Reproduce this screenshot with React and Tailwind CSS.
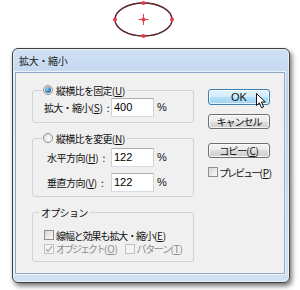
import React from "react";

const M = ({ c }) => (
  <span className="tracking-[-0.2px]">
    (<span className="underline">{c}</span>)
  </span>
);

function Radio({ checked }) {
  return (
    <span className="w-[10px] h-[10px] shrink-0 rounded-full border border-[#8e8f8f] bg-[radial-gradient(circle_at_60%_65%,#ffffff,#d8d8d8)] flex items-center justify-center">
      {checked && (
        <span className="w-[6px] h-[6px] rounded-full bg-[radial-gradient(circle_at_35%_35%,#8fd8fb,#1c64a0_70%)]" />
      )}
    </span>
  );
}

function Check({ checked, disabled }) {
  return (
    <span
      className={`w-[10px] h-[10px] shrink-0 border flex items-center justify-center ${
        disabled
          ? "border-[#c2c2c2] bg-[#f4f4f4]"
          : "border-[#8e8f8f] bg-[linear-gradient(135deg,#d6d6d6,#fbfbfb)]"
      }`}
    >
      {checked && (
        <svg width="8" height="8" viewBox="0 0 8 8">
          <path d="M1 4.2 L3 6.5 L7 1.2" fill="none" stroke="#a6a6a6" strokeWidth="1.2" />
        </svg>
      )}
    </span>
  );
}

function Btn({ children, hot, cls }) {
  return (
    <div
      className={`relative w-[62px] flex items-center justify-center rounded-[3px] border leading-none shadow-[inset_0_0_0_1px_rgba(255,255,255,0.75)] ${
        hot
          ? "border-[#3c7fb1] bg-[linear-gradient(#e6f4fd,#d2ecfb_50%,#b6e1fb_50%,#9fd3f2)]"
          : "border-[#707070] bg-[linear-gradient(#f2f2f2,#ebebeb_50%,#dddddd_50%,#cfcfcf)]"
      } ${cls}`}
    >
      {children}
    </div>
  );
}

function Field({ value }) {
  return (
    <div className="w-[43px] h-[19px] shrink-0 bg-white border border-[#abadb3] border-b-[#d8dce2] border-l-[#cfd2d8] border-r-[#cfd2d8] flex items-center pl-[2px] text-[11px] font-['Liberation_Sans',sans-serif] text-black">
      {value}
    </div>
  );
}

const Pct = () => (
  <span className="ml-[3px] font-['Liberation_Sans',sans-serif] text-[11px]">%</span>
);

export default function App() {
  return (
    <div className="w-[300px] h-[290px] bg-white overflow-hidden font-['Noto_Sans_CJK_JP',sans-serif] text-[10px] text-[#111]">
      {/* ellipse */}
      <div className="h-[48px] pl-[109px]">
        <svg width="70" height="42" viewBox="0 0 70 42">
          <ellipse cx="34.5" cy="19.5" rx="28.5" ry="16.5" fill="none" stroke="#1a1414" strokeWidth="1.4" />
          <ellipse cx="34.5" cy="19.5" rx="28.5" ry="16.5" fill="none" stroke="#e0404c" strokeWidth="0.5" />
          <circle cx="6" cy="19.5" r="2" fill="#ee3a4c" />
          <circle cx="63" cy="19.5" r="2" fill="#ee3a4c" />
          <circle cx="34.5" cy="3" r="2" fill="#ee3a4c" />
          <circle cx="34.5" cy="36" r="2" fill="#ee3a4c" />
          <path d="M29.5 19.5 H39.5 M34.5 14 V25" stroke="#ee3a4c" strokeWidth="1" />
          <circle cx="34.5" cy="19.5" r="2" fill="#ee3a4c" />
        </svg>
      </div>

      {/* dialog */}
      <div className="ml-[12px] w-[278px] h-[235px] rounded-[6px] border border-[#3f3f3f] bg-[linear-gradient(180deg,#cfe0f3,#bcd3ed_18%,#c8dbf0_60%,#d0e1f3)] shadow-[inset_0_0_0_1px_rgba(255,255,255,0.55),2px_3px_5px_rgba(0,0,0,0.55)] flex flex-col pl-[2px] pr-[4px] pb-[8px]">
        <div className="h-[23px] flex items-center pl-[4px] text-[10px] tracking-[-0.3px] text-[#1a1a1a]">
          拡大・縮小
        </div>
        <div className="flex-1 flex border border-[#8ea8c5] bg-[#f0f0f0] shadow-[0_0_0_1px_rgba(255,255,255,0.6)]">
          {/* left column */}
          <div className="ml-[16px] w-[162px] flex flex-col pt-[10px]">
            <fieldset className="border border-[#cdd3d9] rounded-[3px] pb-[5px]">
              <legend className="ml-[9px] pl-[1px] pr-[2px] h-[14px] flex items-center gap-[3px]">
                <Radio checked />
                <span className="whitespace-nowrap">
                  <span className="tracking-[-0.7px]">縦横比を固定</span>
                  <M c="U" />
                </span>
              </legend>
              <div className="mt-[1px] flex items-center pl-[11px]">
                <span className="w-[67px] whitespace-nowrap">
                  <span className="tracking-[-0.7px]">拡大・縮小</span>
                  <M c="S" />
                  <span className="ml-[4px]">:</span>
                </span>
                <Field value="400" />
                <Pct />
              </div>
            </fieldset>

            <fieldset className="mt-[8px] border border-[#cdd3d9] rounded-[3px] pb-[4px]">
              <legend className="ml-[9px] pl-[1px] pr-[2px] h-[14px] flex items-center gap-[3px]">
                <Radio />
                <span className="whitespace-nowrap">
                  <span className="tracking-[-0.7px]">縦横比を変更</span>
                  <M c="N" />
                </span>
              </legend>
              <div className="mt-[3px] flex items-center pl-[14px]">
                <span className="w-[64px] whitespace-nowrap">
                  <span className="tracking-[-0.5px]">水平方向</span>
                  <M c="H" />
                  <span className="ml-[4px]">:</span>
                </span>
                <Field value="122" />
                <Pct />
              </div>
              <div className="mt-[6px] flex items-center pl-[14px]">
                <span className="w-[64px] whitespace-nowrap">
                  <span className="tracking-[-0.5px]">垂直方向</span>
                  <M c="V" />
                  <span className="ml-[4px]">:</span>
                </span>
                <Field value="122" />
                <Pct />
              </div>
            </fieldset>

            <fieldset className="mt-[8px] border border-[#cdd3d9] rounded-[3px] pb-[6px]">
              <legend className="ml-[6px] px-[2px] h-[14px] flex items-center tracking-[-0.7px]">オプション</legend>
              <div className="mt-[9px] h-[14px] flex items-center pl-[11px] gap-[2px]">
                <Check />
                <span className="whitespace-nowrap">
                  <span className="tracking-[-1.1px]">線幅と効果も拡大・縮小</span>
                  <M c="E" />
                </span>
              </div>
              <div className="h-[13px] flex items-center pl-[11px] text-[#8d8d8d]">
                <Check checked disabled />
                <span className="ml-[2px] whitespace-nowrap">
                  <span className="tracking-[-2px]">オブジェクト</span>
                  <M c="O" />
                </span>
                <span className="ml-[7px]">
                  <Check disabled />
                </span>
                <span className="ml-[2px] whitespace-nowrap">
                  <span className="tracking-[-1.4px]">パターン</span>
                  <M c="T" />
                </span>
              </div>
            </fieldset>
          </div>

          {/* right column */}
          <div className="ml-[14px] w-[62px] flex flex-col pt-[16px]">
            <Btn hot cls="h-[16px]">
              <span className="font-['Liberation_Sans',sans-serif] text-[11px]">OK</span>
              <svg className="absolute left-[47px] top-[3px]" width="11" height="16" viewBox="0 0 11 16">
                <path d="M0.5 0.5 L0.5 12.5 L3.4 9.8 L5.6 14.8 L7.6 13.9 L5.5 9 L9.3 9 Z" fill="#ffffff" stroke="#111" strokeWidth="1" strokeLinejoin="round" />
              </svg>
            </Btn>
            <Btn cls="mt-[9px] h-[15px]">
              <span className="tracking-[-1px]">キャンセル</span>
            </Btn>
            <Btn cls="mt-[14px] h-[15px]">
              <span className="whitespace-nowrap">
                <span className="tracking-[-1px]">コピー</span>
                <M c="C" />
              </span>
            </Btn>
            <div className="mt-[8px] h-[12px] flex items-center gap-[1px]">
              <Check />
              <span className="whitespace-nowrap">
                <span className="tracking-[-1.9px]">プレビュー</span>
                <M c="P" />
              </span>
            </div>
          </div>
        </div>
      </div>
    </div>
  );
}
